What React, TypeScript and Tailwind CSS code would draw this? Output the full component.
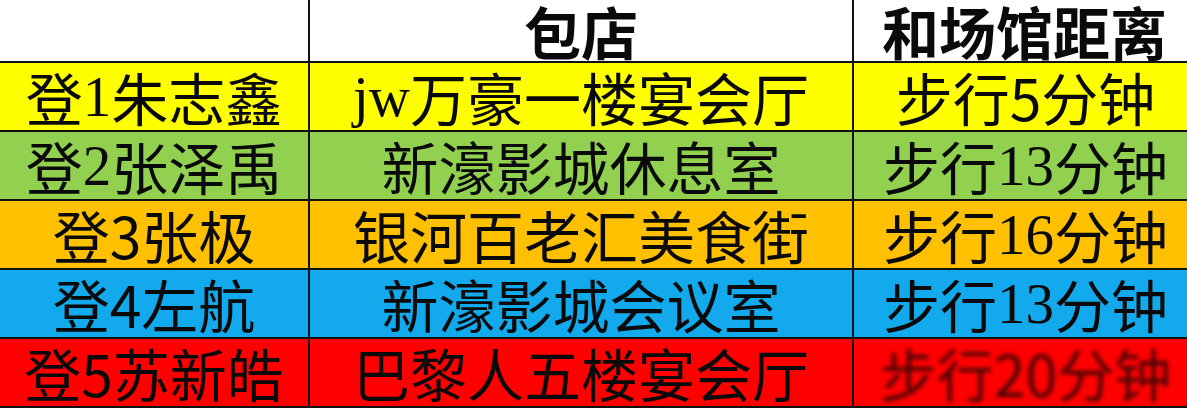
import React from 'react'

type Seg = { t: string; serif?: boolean }

interface Row {
  bg: string
  name: Seg[]
  room: Seg[]
  walk: Seg[]
  blurred?: boolean
}

const rows: Row[] = [
  {
    bg: 'bg-[#ffff00]',
    name: [{ t: '登' }, { t: '1', serif: true }, { t: '朱志鑫' }],
    room: [{ t: 'jw', serif: true }, { t: '万豪一楼宴会厅' }],
    walk: [{ t: '步行5分钟' }],
  },
  {
    bg: 'bg-[#92d050]',
    name: [{ t: '登' }, { t: '2', serif: true }, { t: '张泽禹' }],
    room: [{ t: '新濠影城休息室' }],
    walk: [{ t: '步行' }, { t: '13', serif: true }, { t: '分钟' }],
  },
  {
    bg: 'bg-[#ffc000]',
    name: [{ t: '登3张极' }],
    room: [{ t: '银河百老汇美食街' }],
    walk: [{ t: '步行' }, { t: '16', serif: true }, { t: '分钟' }],
  },
  {
    bg: 'bg-[#12aaec]',
    name: [{ t: '登4左航' }],
    room: [{ t: '新濠影城会议室' }],
    walk: [{ t: '步行' }, { t: '13', serif: true }, { t: '分钟' }],
  },
  {
    bg: 'bg-[#ff0000]',
    name: [{ t: '登5苏新皓' }],
    room: [{ t: '巴黎人五楼宴会厅' }],
    walk: [{ t: '步行20分钟' }],
    blurred: true,
  },
]

function Text({ segs }: { segs: Seg[] }) {
  return (
    <>
      {segs.map((s, i) => (
        <span key={i} className={s.serif ? "font-['Liberation_Serif',serif]" : ''}>
          {s.t}
        </span>
      ))}
    </>
  )
}

const cell = 'flex items-center justify-center h-[67px] text-[57px] leading-[1.15] text-[#0a0a0a] whitespace-nowrap'
const head = 'bg-white h-[61px] flex items-center justify-center text-[57px] font-bold leading-[1.05] text-[#0a0a0a]'

export default function App() {
  return (
    <div className="w-[1187px] h-[410px] overflow-hidden bg-white font-['Noto_Sans_CJK_SC',sans-serif]">
      <div className="grid grid-cols-[308px_542px_1fr] gap-[2px] bg-[#111] pb-[2px]">
        {/* Header */}
        <div className="bg-white h-[61px]" />
        <div className={head}>包店</div>
        <div className={`${head} pl-[8px]`}>和场馆距离</div>

        {rows.map((r, i) => (
          <React.Fragment key={i}>
            <div className={`${cell} ${r.bg}`}>
              <Text segs={r.name} />
            </div>
            <div className={`${cell} ${r.bg}`}>
              <Text segs={r.room} />
            </div>
            <div className={`${cell} ${r.bg} pl-[10px]`}>
              {r.blurred ? (
                <span className="blur-[2px] text-[#4a0505]">
                  <Text segs={r.walk} />
                </span>
              ) : (
                <Text segs={r.walk} />
              )}
            </div>
          </React.Fragment>
        ))}
      </div>
    </div>
  )
}
